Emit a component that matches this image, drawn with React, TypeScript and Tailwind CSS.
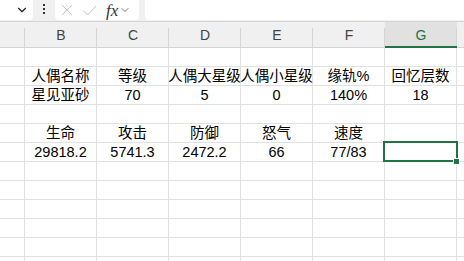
import React from 'react';
import { ChevronDown } from 'lucide-react';

const cols = ['B', 'C', 'D', 'E', 'F', 'G'];

const rows: string[][] = [
  [],
  ['人偶名称', '等级', '人偶大星级', '人偶小星级', '缘轨%', '回忆层数'],
  ['星见亚砂', '70', '5', '0', '140%', '18'],
  [],
  ['生命', '攻击', '防御', '怒气', '速度', ''],
  ['29818.2', '5741.3', '2472.2', '66', '77/83', ''],
  [],
  [],
  [],
  [],
  [],
  [],
];

const font = { fontFamily: '"Liberation Sans", "Noto Sans CJK SC", sans-serif' };

const App: React.FC = () => {
  return (
    <div className="relative w-[464px] h-[261px] overflow-hidden bg-white text-black" style={font}>
      {/* Formula bar */}
      <div className="flex h-[21px] bg-[#f0f0f0]">
        <div className="w-[33px] shrink-0 h-[20px] bg-white rounded-br-[4px] flex items-center justify-end pr-[4px]">
          <ChevronDown size={14} strokeWidth={2} color="#222" />
        </div>
        <div className="w-[22px] shrink-0 flex flex-col items-center pt-[4px] gap-[2px]">
          <div className="w-[2px] h-[2px] bg-[#333]" />
          <div className="w-[2px] h-[2px] bg-[#333]" />
          <div className="w-[2px] h-[2px] bg-[#333]" />
        </div>
        <div className="w-[84px] shrink-0 h-[20px] bg-white rounded-b-[4px] flex items-center pl-[6px]">
          <svg width="12" height="12" viewBox="0 0 12 12" fill="none" stroke="#c4c4c4" strokeWidth="1">
            <path d="M1 1l10 10M11 1L1 11" />
          </svg>
          <svg className="ml-[9px]" width="15" height="11" viewBox="0 0 15 11" fill="none" stroke="#c4c4c4" strokeWidth="1">
            <path d="M1 5.5l4.5 4.5L14 1" />
          </svg>
          <span className="ml-[9px] text-[17px] leading-none italic text-[#333]" style={{ fontFamily: '"Liberation Serif", serif' }}>fx</span>
          <ChevronDown className="ml-[1px]" size={12} strokeWidth={1.8} color="#666" />
        </div>
        <div className="ml-[6px] flex-1 h-[20px] bg-white rounded-bl-[4px]" />
      </div>

      {/* Column headers */}
      <div className="flex h-[27px] bg-[#f0f0f0] border-t border-b border-[#d4d4d4]">
        <div className="w-[25px] shrink-0 flex items-end">
          <div className="ml-auto w-[1px] h-[19px] bg-[#d4d4d4]" />
        </div>
        {cols.map((c) => (
          <div
            key={c}
            className={
              c === 'G'
                ? 'relative w-[72px] shrink-0 flex items-end justify-center bg-[#e1e1e1] text-[#217346] text-[14px] leading-[20px]'
                : 'relative w-[72px] shrink-0 flex items-end justify-center text-[#444] text-[14px] leading-[20px]'
            }
          >
            <span className="pb-[2px]">{c}</span>
            <div className="absolute right-0 bottom-0 w-[1px] h-[19px] bg-[#d4d4d4]" />
            {c === 'G' && <div className="absolute left-0 right-0 bottom-[-1px] h-[2px] bg-[#217346]" />}
          </div>
        ))}
        <div className="flex-1" />
      </div>

      {/* Grid */}
      <div className="flex flex-col">
        {rows.map((r, i) => (
          <div key={i} className="flex h-[19px] border-b border-[#e1e1e1]">
            <div className="w-[25px] shrink-0 border-r border-[#e1e1e1]" />
            {cols.map((c, j) => (
              <div
                key={c}
                className="w-[72px] shrink-0 border-r border-[#e1e1e1] flex items-end justify-center whitespace-nowrap text-[14.5px] leading-[17px]"
              >
                {r[j] ?? ''}
              </div>
            ))}
            <div className="flex-1" />
          </div>
        ))}
      </div>

      {/* Active cell G6 */}
      <div className="absolute left-[383px] top-[141px] w-[75px] h-[21px] border-2 border-[#217346]" />
      <div className="absolute left-[453px] top-[158px] w-[7px] h-[7px] bg-[#217346] border border-white" />
    </div>
  );
};

export default App;
